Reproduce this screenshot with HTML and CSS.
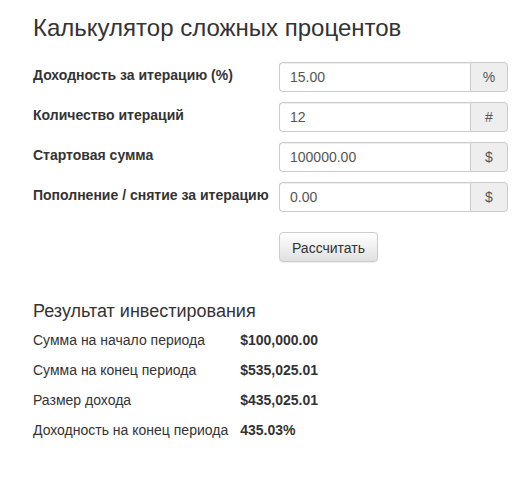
FILE: index.html
```html
<!DOCTYPE html>
<html lang="ru">
<head>
<meta charset="utf-8">
<title>Калькулятор сложных процентов</title>
<link rel="stylesheet" href="styles.css">
</head>
<body>
<div class="page">
  <h1 class="title">Калькулятор сложных процентов</h1>
  <form class="calc-form">
    <label class="field-label">Доходность за итерацию (%)</label>
    <div class="input-group"><span class="input">15.00</span><span class="addon">%</span></div>

    <label class="field-label">Количество итераций</label>
    <div class="input-group"><span class="input">12</span><span class="addon">#</span></div>

    <label class="field-label">Стартовая сумма</label>
    <div class="input-group"><span class="input">100000.00</span><span class="addon">$</span></div>

    <label class="field-label">Пополнение / снятие за итерацию</label>
    <div class="input-group"><span class="input">0.00</span><span class="addon">$</span></div>

    <div class="spacer"></div>
    <div class="actions"><button type="button" class="btn">Рассчитать</button></div>
  </form>

  <section class="results">
    <h2 class="results-title">Результат инвестирования</h2>
    <div class="results-table">
      <div class="r-label">Сумма на начало периода</div><div class="r-value">$100,000.00</div>
      <div class="r-label">Сумма на конец периода</div><div class="r-value">$535,025.01</div>
      <div class="r-label">Размер дохода</div><div class="r-value">$435,025.01</div>
      <div class="r-label">Доходность на конец периода</div><div class="r-value">435.03%</div>
    </div>
  </section>
</div>
</body>
</html>
```

FILE: styles.css
```css
html, body {
  margin: 0;
  padding: 0;
  background: #fff;
}
body {
  font-family: "Liberation Sans", Arial, sans-serif;
  font-size: 14px;
  line-height: 20px;
  color: #333;
}
.page {
  padding: 15px 15px 0 33px;
}
.title {
  margin: 0;
  font-size: 24px;
  font-weight: 400;
  line-height: 26px;
  color: #333;
}
.calc-form {
  margin-top: 21px;
  display: grid;
  grid-template-columns: 246px 229px;
  row-gap: 10px;
}
.field-label {
  font-weight: 700;
  padding-top: 3px;
  white-space: nowrap;
}
.input-group {
  display: flex;
  height: 30px;
}
.input {
  flex: 1;
  border: 1px solid #ccc;
  border-right: 0;
  border-radius: 4px 0 0 4px;
  padding: 4px 10px;
  color: #555;
  background: #fff;
  box-shadow: inset 0 1px 1px rgba(0,0,0,.075);
}
.addon {
  width: 36px;
  border: 1px solid #ccc;
  border-radius: 0 4px 4px 0;
  background: #eee;
  color: #555;
  text-align: center;
  padding: 4px 0;
}
.actions {
  padding-top: 10px;
}
.btn {
  font-family: inherit;
  font-size: 14px;
  line-height: 20px;
  color: #333;
  height: 30px;
  padding: 5px 12px 3px;
  border: 1px solid #ccc;
  border-radius: 4px;
  background: linear-gradient(#fff 0%, #e0e0e0 100%);
  box-shadow: inset 0 1px 0 rgba(255,255,255,.15), 0 1px 1px rgba(0,0,0,.075);
}
.results {
  margin-top: 39px;
}
.results-title {
  margin: 0 0 4px;
  font-size: 18px;
  font-weight: 400;
  line-height: 20px;
  color: #333;
}
.results-table {
  display: grid;
  grid-template-columns: max-content max-content;
  column-gap: 12px;
}
.r-label, .r-value {
  padding: 5px 0;
}
.r-value {
  font-weight: 700;
}
```
